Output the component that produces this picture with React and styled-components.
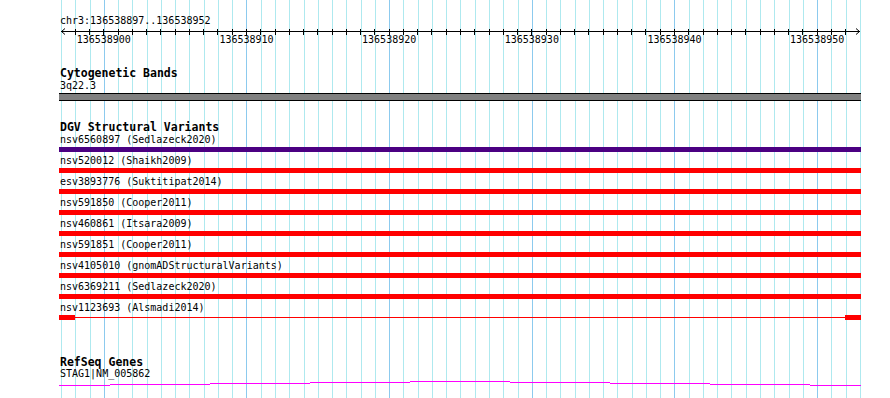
import React from "react";
import styled, { createGlobalStyle } from "styled-components";

// 56 bases across the view, 136538897..136538952
const BASES = 56;
const GRID_LEFT = 61;
const GRID_SPAN = 799;
const STEP = GRID_SPAN / BASES;
const MAJOR = [3, 13, 23, 33, 43, 53];
const TICK_LABELS = [136538900, 136538910, 136538920, 136538930, 136538940, 136538950];
const TRACK_LEFT = 59;
const TRACK_WIDTH = 802;

const variants = [
  { name: "nsv6560897", source: "Sedlazeck2020", color: "#4b0082" },
  { name: "nsv520012", source: "Shaikh2009", color: "#ff0000" },
  { name: "esv3893776", source: "Suktitipat2014", color: "#ff0000" },
  { name: "nsv591850", source: "Cooper2011", color: "#ff0000" },
  { name: "nsv460861", source: "Itsara2009", color: "#ff0000" },
  { name: "nsv591851", source: "Cooper2011", color: "#ff0000" },
  { name: "nsv4105010", source: "gnomADStructuralVariants", color: "#ff0000" },
  { name: "nsv6369211", source: "Sedlazeck2020", color: "#ff0000" },
  { name: "nsv1123693", source: "Alsmadi2014", color: "#ff0000", split: true },
];

// gene line steps: [x from, x to, y] relative to the track
const geneSteps = [
  [0, 51, 4],
  [51, 151, 3],
  [151, 251, 2],
  [251, 351, 1],
  [351, 451, 0],
  [451, 551, 1],
  [551, 651, 2],
  [651, 751, 3],
  [751, 802, 4],
];

const GlobalStyle = createGlobalStyle`
  html, body {
    margin: 0;
    padding: 0;
    background: #ffffff;
  }
  body {
    font-family: "DejaVu Sans Mono", "Liberation Mono", monospace;
    font-size: 10px;
    color: #000000;
  }
`;

const Page = styled.div`
  position: relative;
  width: 890px;
  height: 398px;
  padding-left: ${TRACK_LEFT}px;
  box-sizing: border-box;
  overflow: hidden;
`;

const GridLayer = styled.div`
  position: absolute;
  top: 0;
  bottom: 0;
  left: ${GRID_LEFT}px;
  width: ${GRID_SPAN + 1}px;
  display: flex;
  box-sizing: border-box;
  border-right: 1px solid #aee9ef;
  z-index: 0;
`;

const GridCell = styled.div`
  flex: 1 1 0;
  box-sizing: border-box;
  border-left: 1px solid ${(p) => (p.$major ? "#8ccaee" : "#aee9ef")};
`;

const Content = styled.div`
  position: relative;
  z-index: 1;
  width: ${TRACK_WIDTH}px;
`;

const Ruler = styled.div`
  padding-top: 14px;
`;

const LocusLabel = styled.div`
  line-height: 14px;
  padding-left: 1px;
  white-space: nowrap;
`;

const AxisSvg = styled.svg`
  display: block;
  overflow: visible;
`;

const TickRow = styled.div`
  display: flex;
  margin-left: ${GRID_LEFT - TRACK_LEFT + 3 * STEP - 5 * STEP}px;
`;

const TickLabel = styled.div`
  flex: 0 0 ${10 * STEP}px;
  text-align: center;
  line-height: 10px;
  white-space: nowrap;
`;

const Track = styled.div`
  margin-top: ${(p) => p.$gap}px;
`;

const TrackTitle = styled.div`
  font-weight: bold;
  font-size: 11.5px;
  padding-top: 2px;
  line-height: ${(p) => p.$lh || 11}px;
  padding-left: 1px;
  white-space: nowrap;
`;

const FeatureLabel = styled.div`
  line-height: 14px;
  padding-left: 1px;
  white-space: nowrap;
`;

const Band = styled.div`
  height: 6px;
  background: #808080;
  border-top: 1px solid #000000;
  border-bottom: 1px solid #000000;
`;

const FeatureRow = styled.div`
  margin-bottom: 2px;
`;

const FeatureBar = styled.div`
  height: 5px;
  background: ${(p) => p.$color};
`;

const SplitBar = styled.div`
  height: 5px;
  display: flex;
  align-items: center;
`;

const Block = styled.div`
  flex: 0 0 16px;
  height: 5px;
  background: ${(p) => p.$color};
`;

const Connector = styled.div`
  flex: 1 1 auto;
  height: 1px;
  background: ${(p) => p.$color};
`;

const GeneSvg = styled.svg`
  display: block;
`;

function Axis() {
  const ticks = [];
  for (let k = 1; k < BASES; k++) {
    const x = Math.floor(GRID_LEFT - TRACK_LEFT + k * STEP) + 0.5;
    ticks.push(<line key={k} x1={x} y1={1} x2={x} y2={7} />);
  }
  return (
    <AxisSvg width={TRACK_WIDTH} height={7} shapeRendering="crispEdges">
      <g stroke="#000" strokeWidth="1" fill="none">
        <line x1={2} y1={3.5} x2={801} y2={3.5} />
        {ticks}
        <polyline points="6,0.5 2.5,3.5 6,6.5" shapeRendering="auto" />
        <polyline points="797,0.5 800.5,3.5 797,6.5" shapeRendering="auto" />
      </g>
    </AxisSvg>
  );
}

function GeneLine() {
  return (
    <GeneSvg width={TRACK_WIDTH} height={5} shapeRendering="crispEdges">
      {geneSteps.map(([a, b, y]) => (
        <rect key={a} x={a} y={y} width={b - a} height={1} fill="#ff00ff" />
      ))}
    </GeneSvg>
  );
}

export default function App() {
  return (
    <Page>
      <GlobalStyle />
      <GridLayer>
        {Array.from({ length: BASES }, (_, k) => (
          <GridCell key={k} $major={MAJOR.includes(k)} />
        ))}
      </GridLayer>
      <Content>
        <Ruler>
          <LocusLabel>chr3:136538897..136538952</LocusLabel>
          <Axis />
          <TickRow>
            {TICK_LABELS.map((t) => (
              <TickLabel key={t}>{t}</TickLabel>
            ))}
          </TickRow>
        </Ruler>

        <Track $gap={21}>
          <TrackTitle>Cytogenetic Bands</TrackTitle>
          <FeatureLabel>3q22.3</FeatureLabel>
          <Band />
        </Track>

        <Track $gap={19}>
          <TrackTitle>DGV Structural Variants</TrackTitle>
          {variants.map((v) => (
            <FeatureRow key={v.name}>
              <FeatureLabel>
                {v.name} ({v.source})
              </FeatureLabel>
              {v.split ? (
                <SplitBar>
                  <Block $color={v.color} />
                  <Connector $color={v.color} />
                  <Block $color={v.color} />
                </SplitBar>
              ) : (
                <FeatureBar $color={v.color} />
              )}
            </FeatureRow>
          ))}
        </Track>

        <Track $gap={35}>
          <TrackTitle $lh={10}>RefSeq Genes</TrackTitle>
          <FeatureLabel>STAG1|NM_005862</FeatureLabel>
          <GeneLine />
        </Track>
      </Content>
    </Page>
  );
}
